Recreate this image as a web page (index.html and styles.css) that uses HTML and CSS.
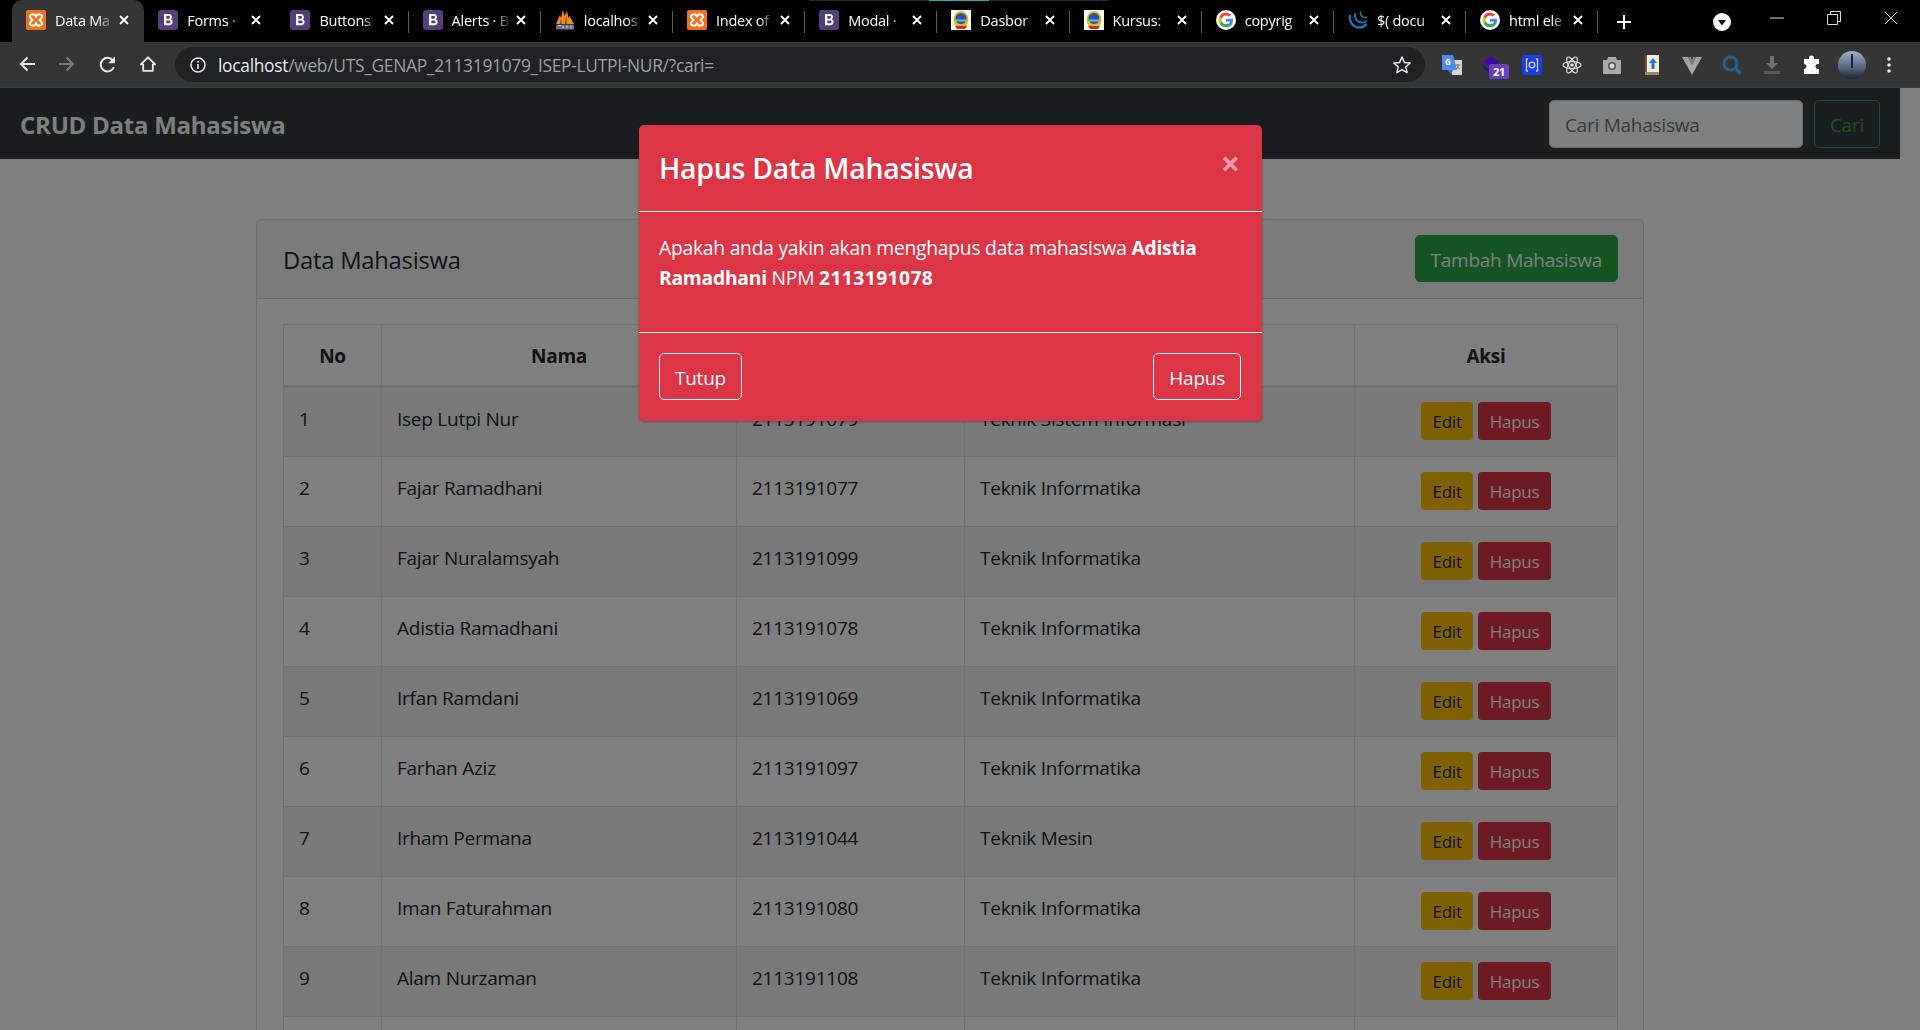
FILE: index.html
```html
<!DOCTYPE html>
<html lang="id">
<head>
  <meta charset="UTF-8">
  <title>Data Mahasiswa</title>
  <link rel="stylesheet" href="styles.css">
</head>
<body>
  <svg class="defs" width="0" height="0">
    <symbol id="i-xampp" viewBox="0 0 20 20">
      <rect width="20" height="20" rx="2" fill="#f0741f"/>
      <path d="M6 4.500h2.500l1.500 2 1.500-2H14a2 2 0 0 1 1.500 3.300L13.500 10l2 2.200A2 2 0 0 1 14 15.500h-2.500L10 13.500l-1.500 2H6a2 2 0 0 1-1.500-3.300L6.500 10l-2-2.200A2 2 0 0 1 6 4.500z" fill="none" stroke="#fff" stroke-width="2"/>
    </symbol>
    <symbol id="i-boot" viewBox="0 0 20 20">
      <rect width="20" height="20" rx="3" fill="#563d7c"/>
      <path d="M6 4h5a3 3 0 0 1 2 5.200 3.200 3.200 0 0 1-1.500 6H6zM8.300 6v2.700h2.400a1.350 1.350 0 0 0 0-2.700zM8.300 10.600v2.700h2.900a1.350 1.350 0 0 0 0-2.700z" fill="#fff" fill-rule="evenodd"/>
    </symbol>
    <symbol id="i-pma" viewBox="0 0 20 20">
      <path d="M1 14 5 5l1 3 2-8 1.500 6L12 1l1.500 7 1-2L19 14z" fill="#f28a1c"/>
      <path d="M6 8 5 14h1.500zM11.500 3 10 14h1.500z" fill="#6b3d10"/>
      <rect x="1" y="14.500" width="18" height="5" rx="1" fill="#66728c"/>
      <path d="M3 15.500h3M8 15.500v3M12 15.500v3M16 15.500v3" stroke="#c8cfdd"/>
    </symbol>
    <symbol id="i-logo" viewBox="0 0 20 20">
      <rect width="20" height="20" fill="#fff"/>
      <ellipse cx="10" cy="9.500" rx="7.500" ry="8.500" fill="#e8b90f"/>
      <circle cx="10" cy="8.500" r="5.500" fill="#1d57b5"/>
      <path d="M5 9.500h10v2H5z" fill="#7fb2e5"/>
      <path d="M4 16h12l-2 3H6z" fill="#d2261f"/>
    </symbol>
    <symbol id="i-google" viewBox="0 0 20 20">
      <circle cx="10" cy="10" r="10" fill="#fff"/>
      <path d="M17 10.200c0-.5 0-1-.1-1.500H10v2.900h4a3.400 3.400 0 0 1-1.500 2.200l2.400 1.900c1.400-1.300 2.100-3.200 2.100-5.500z" fill="#4285f4"/>
      <path d="M10 17.300c2 0 3.600-.7 4.900-1.800l-2.400-1.900c-.7.500-1.500.7-2.500.7a4.300 4.300 0 0 1-4.100-3L3.400 13.200a7.300 7.300 0 0 0 6.600 4.100z" fill="#34a853"/>
      <path d="M5.900 11.300a4.300 4.300 0 0 1 0-2.700L3.400 6.700a7.300 7.300 0 0 0 0 6.500z" fill="#fbbc05"/>
      <path d="M10 5.600c1.100 0 2.100.4 2.800 1.100L15 4.600a7.300 7.300 0 0 0-11.600 2.100l2.500 1.900A4.300 4.300 0 0 1 10 5.600z" fill="#ea4335"/>
    </symbol>
    <symbol id="i-jquery" viewBox="0 0 20 20">
      <g fill="none" stroke="#1f74b4" stroke-linecap="round">
        <path d="M2 6c-1 6 3.500 12 10 11.500 2.500-.2 4.500-1.200 6-3" stroke-width="2.400"/>
        <path d="M7 4c-.6 4 2 8 6.500 8.500 1.700.2 3.300-.2 4.500-1" stroke-width="2"/>
        <path d="M12.500 2c-.5 2.500 1 5 3.700 5.500.8.100 1.500 0 2.200-.3" stroke-width="1.700"/>
      </g>
    </symbol>
    <symbol id="i-close" viewBox="0 0 12 12">
      <path d="M2 2l8 8M10 2l-8 8" stroke="#fff" stroke-width="1.800" fill="none"/>
    </symbol>
  </svg>

  <div class="tabstrip">
    <span class="load-line"></span>
    <div class="tab active"><svg class="fav"><use href="#i-xampp"/></svg><span class="tab-title">Data Ma</span><svg class="tab-x"><use href="#i-close"/></svg></div>
    <div class="tab"><svg class="fav"><use href="#i-boot"/></svg><span class="tab-title">Forms ·</span><svg class="tab-x"><use href="#i-close"/></svg></div>
    <div class="tab"><svg class="fav"><use href="#i-boot"/></svg><span class="tab-title">Buttons</span><svg class="tab-x"><use href="#i-close"/></svg></div>
    <div class="tab"><svg class="fav"><use href="#i-boot"/></svg><span class="tab-title">Alerts · B</span><svg class="tab-x"><use href="#i-close"/></svg></div>
    <div class="tab"><svg class="fav"><use href="#i-pma"/></svg><span class="tab-title">localhos</span><svg class="tab-x"><use href="#i-close"/></svg></div>
    <div class="tab"><svg class="fav"><use href="#i-xampp"/></svg><span class="tab-title">Index of</span><svg class="tab-x"><use href="#i-close"/></svg></div>
    <div class="tab"><svg class="fav"><use href="#i-boot"/></svg><span class="tab-title">Modal ·</span><svg class="tab-x"><use href="#i-close"/></svg></div>
    <div class="tab"><svg class="fav"><use href="#i-logo"/></svg><span class="tab-title">Dasbor</span><svg class="tab-x"><use href="#i-close"/></svg></div>
    <div class="tab"><svg class="fav"><use href="#i-logo"/></svg><span class="tab-title">Kursus:</span><svg class="tab-x"><use href="#i-close"/></svg></div>
    <div class="tab"><svg class="fav"><use href="#i-google"/></svg><span class="tab-title">copyrig</span><svg class="tab-x"><use href="#i-close"/></svg></div>
    <div class="tab"><svg class="fav"><use href="#i-jquery"/></svg><span class="tab-title">$( docu</span><svg class="tab-x"><use href="#i-close"/></svg></div>
    <div class="tab"><svg class="fav"><use href="#i-google"/></svg><span class="tab-title">html ele</span><svg class="tab-x"><use href="#i-close"/></svg></div>
    <svg class="new-tab" viewBox="0 0 16 16"><path d="M8 1v14M1 8h14" stroke="#fff" stroke-width="2"/></svg>
    <div class="strip-right">
      <svg class="tab-search" viewBox="0 0 18 18"><circle cx="9" cy="9" r="9" fill="#fff"/><path d="M5 7h8l-4 5.500z" fill="#111"/></svg>
      <div class="win-btns">
        <svg viewBox="0 0 14 14"><path d="M0 7h14" stroke="#ddd"/></svg>
        <svg viewBox="0 0 14 14"><path d="M.5 3.500h10v10H.5zM3.500 3.500v-3h10v10h-3" stroke="#ddd" fill="none"/></svg>
        <svg viewBox="0 0 14 14"><path d="M1 1l12 12M13 1L1 13" stroke="#ddd"/></svg>
      </div>
    </div>
  </div>

  <div class="toolbar">
    <div class="nav-btns">
      <svg viewBox="0 0 16 16"><path d="M16 8H2M8.500 1.500 2 8l6.500 6.500" stroke="#e8eaed" stroke-width="2" fill="none"/></svg>
      <svg viewBox="0 0 16 16"><path d="M0 8h14M7.500 1.500 14 8l-6.500 6.500" stroke="#7b7d80" stroke-width="2" fill="none"/></svg>
      <svg viewBox="0 0 16 16"><path d="M14 10.500A6.400 6.400 0 1 1 13.200 4.300" stroke="#e8eaed" stroke-width="1.900" fill="none"/><path d="M15 .500v6.300H8.700z" fill="#e8eaed"/></svg>
      <svg viewBox="0 0 16 16"><path d="M8 1.300.800 8.300h2.400v6.500h9.600V8.300h2.400z" stroke="#e8eaed" stroke-width="1.800" fill="none" stroke-linejoin="round"/></svg>
    </div>
    <div class="omnibox">
      <svg class="info" viewBox="0 0 16 16"><circle cx="8" cy="8" r="7" stroke="#e8eaed" stroke-width="1.500" fill="none"/><path d="M7.200 7h1.600v5H7.200zM7.200 4h1.600v1.600H7.200z" fill="#e8eaed"/></svg>
      <span class="url"><span class="url-host">localhost</span>/web/UTS_GENAP_2113191079_ISEP-LUTPI-NUR/?cari=</span>
      <svg class="star" viewBox="0 0 20 20"><path d="m10 2 2.400 5.400 5.800.6-4.400 3.900 1.300 5.800-5.100-3-5.100 3 1.300-5.800L1.800 8l5.800-.6z" stroke="#e8eaed" stroke-width="1.500" fill="none" stroke-linejoin="round"/></svg>
    </div>
    <div class="ext-list">
      <svg viewBox="0 0 20 20"><path d="M8 5h12v15H10z" fill="#d6d6d6"/><path d="M0 0h11l4 15H0z" fill="#4d8bf0"/><path d="M5 15h6l-2 4z" fill="#3367c0"/><text class="ext-g" x="3" y="10">G</text><path d="M13.500 10h5M16 9v1M15 10c0 2 1.500 3.500 3 4M17 10c0 2-1.500 3.500-3 4" stroke="#777" fill="none"/></svg>
      <div class="ext-badge-wrap">
        <svg viewBox="0 0 20 20"><path d="M9 1l8 6-8 6-8-6z" fill="#3a0ca3"/><path d="M1 10l8 6 8-6v3l-8 6-8-6z" fill="#33099a"/></svg>
        <span class="ext-badge">21</span>
      </div>
      <svg viewBox="0 0 20 20"><rect width="20" height="24" y="-2" rx="5" fill="#1a3fe8"/><path d="M6 4H4.500v12H6M14 4h1.500v12H14" stroke="#cfd6ff" stroke-width="1.300" fill="none"/><circle cx="10" cy="10" r="2.800" stroke="#cfd6ff" stroke-width="1.300" fill="none"/></svg>
      <svg viewBox="0 0 20 20"><g stroke="#e0e0e0" stroke-width="1.200" fill="none"><ellipse cx="10" cy="10" rx="9" ry="3.500"/><ellipse cx="10" cy="10" rx="9" ry="3.500" transform="rotate(60 10 10)"/><ellipse cx="10" cy="10" rx="9" ry="3.500" transform="rotate(120 10 10)"/></g><circle cx="10" cy="10" r="1.800" fill="#e0e0e0"/></svg>
      <svg viewBox="0 0 20 20"><path d="M1 5h4l1-3h8l1 3h4v14H1z" fill="#a8a8a8"/><circle cx="10" cy="11" r="4" fill="#555"/><circle cx="10" cy="11" r="2.400" fill="#d8d8d8"/></svg>
      <svg viewBox="0 0 20 20"><rect x="3" y="0" width="14" height="20" fill="#f3ecd2"/><rect x="3" y="0" width="2" height="20" fill="#7a5a30"/><rect x="3" y="17" width="14" height="3" fill="#9a8a68"/><path d="M11 3l4 5h-2.500v6h-3V8H7z" fill="#1180d8"/></svg>
      <svg viewBox="0 0 20 20"><path d="M0 2h6l4 8 4-8h6L10 20z" fill="#a5a5a5"/><path d="M6 2h3l1 3 1-3h3l-4 8z" fill="#7d7d7d"/></svg>
      <svg viewBox="0 0 20 20"><circle cx="8.500" cy="8.500" r="6.500" stroke="#1f6390" stroke-width="3" fill="none"/><path d="M13 13l6 6" stroke="#1f6390" stroke-width="3"/></svg>
      <svg viewBox="0 0 20 20"><path d="M8 1h4v7h4l-6 6-6-6h4z" fill="#6e6e6e"/><rect x="2" y="16" width="16" height="3" fill="#5a5a5a"/></svg>
      <svg viewBox="0 0 20 20"><path d="M7 3a2.500 2.500 0 0 1 5 0v1h5v5h-1a2.500 2.500 0 0 0 0 5h1v5H2v-5a2.500 2.500 0 0 0 0-5V4h5z" fill="#fff"/></svg>
      <span class="avatar"></span>
      <svg class="kebab" viewBox="0 0 4 18"><circle cx="2" cy="3" r="1.800" fill="#e8eaed"/><circle cx="2" cy="9" r="1.800" fill="#e8eaed"/><circle cx="2" cy="15" r="1.800" fill="#e8eaed"/></svg>
    </div>
  </div>

  <div class="page">
    <div class="content">
      <nav class="navbar">
        <a class="brand">CRUD Data Mahasiswa</a>
        <form class="search">
          <input class="search-input" type="text" placeholder="Cari Mahasiswa">
          <button class="btn btn-outline-success" type="button">Cari</button>
        </form>
      </nav>

      <div class="card">
        <div class="card-header">
          <h5 class="card-title">Data Mahasiswa</h5>
          <button class="btn btn-success" type="button">Tambah Mahasiswa</button>
        </div>
        <div class="card-body">
          <table class="data-table">
            <colgroup>
              <col class="c-no"><col class="c-nama"><col class="c-npm"><col class="c-jur"><col class="c-aksi">
            </colgroup>
            <thead>
              <tr><th>No</th><th>Nama</th><th>NPM</th><th>Jurusan</th><th>Aksi</th></tr>
            </thead>
            <tbody>
              <tr><td>1</td><td>Isep Lutpi Nur</td><td>2113191079</td><td>Teknik Sistem Informasi</td><td class="aksi"><a class="btn-sm btn-warning">Edit</a><a class="btn-sm btn-danger">Hapus</a></td></tr>
              <tr><td>2</td><td>Fajar Ramadhani</td><td>2113191077</td><td>Teknik Informatika</td><td class="aksi"><a class="btn-sm btn-warning">Edit</a><a class="btn-sm btn-danger">Hapus</a></td></tr>
              <tr><td>3</td><td>Fajar Nuralamsyah</td><td>2113191099</td><td>Teknik Informatika</td><td class="aksi"><a class="btn-sm btn-warning">Edit</a><a class="btn-sm btn-danger">Hapus</a></td></tr>
              <tr><td>4</td><td>Adistia Ramadhani</td><td>2113191078</td><td>Teknik Informatika</td><td class="aksi"><a class="btn-sm btn-warning">Edit</a><a class="btn-sm btn-danger">Hapus</a></td></tr>
              <tr><td>5</td><td>Irfan Ramdani</td><td>2113191069</td><td>Teknik Informatika</td><td class="aksi"><a class="btn-sm btn-warning">Edit</a><a class="btn-sm btn-danger">Hapus</a></td></tr>
              <tr><td>6</td><td>Farhan Aziz</td><td>2113191097</td><td>Teknik Informatika</td><td class="aksi"><a class="btn-sm btn-warning">Edit</a><a class="btn-sm btn-danger">Hapus</a></td></tr>
              <tr><td>7</td><td>Irham Permana</td><td>2113191044</td><td>Teknik Mesin</td><td class="aksi"><a class="btn-sm btn-warning">Edit</a><a class="btn-sm btn-danger">Hapus</a></td></tr>
              <tr><td>8</td><td>Iman Faturahman</td><td>2113191080</td><td>Teknik Informatika</td><td class="aksi"><a class="btn-sm btn-warning">Edit</a><a class="btn-sm btn-danger">Hapus</a></td></tr>
              <tr><td>9</td><td>Alam Nurzaman</td><td>2113191108</td><td>Teknik Informatika</td><td class="aksi"><a class="btn-sm btn-warning">Edit</a><a class="btn-sm btn-danger">Hapus</a></td></tr>
              <tr><td></td><td></td><td></td><td></td><td></td></tr>
            </tbody>
          </table>
        </div>
      </div>
    </div>

    <div class="backdrop"></div>

    <div class="modal">
      <div class="modal-header">
        <h5 class="modal-title">Hapus Data Mahasiswa</h5>
        <span class="modal-close">×</span>
      </div>
      <div class="modal-body">
        <p>Apakah anda yakin akan menghapus data mahasiswa <b>Adistia</b> <b>Ramadhani</b> NPM <b class="npm">2113191078</b></p>
      </div>
      <div class="modal-footer">
        <button class="btn btn-outline-light" type="button">Tutup</button>
        <button class="btn btn-outline-light" type="button">Hapus</button>
      </div>
    </div>
  </div>
</body>
</html>
```

FILE: styles.css
```css
:root {
  --font-sans: 'Open Sans', 'Noto Sans', 'Liberation Sans', sans-serif;
  --border: #dee2e6;
  --text: #212529;
}
* { box-sizing: border-box; }
html, body {
  margin: 0;
  height: 100%;
  overflow: hidden;
}
body {
  display: flex;
  flex-direction: column;
  background: #fff;
  color: var(--text);
  font-family: var(--font-sans);
  font-size: 19px;
  letter-spacing: -0.25px;
}
.defs { position: absolute; }

/* tab strip */
.tabstrip {
  position: relative;
  display: flex;
  align-items: stretch;
  height: 42px;
  padding-left: 12px;
  background: #000;
  color: #fff;
  font-size: 14.5px;
}
.load-line {
  position: absolute;
  top: 0;
  left: 809px;
  width: 300px;
  height: 1px;
  background: linear-gradient(90deg, #2a2a2a 40%, #14b8a6 40%, #14b8a6 60%, #2a2a2a 60%);
}
.tab {
  position: relative;
  display: flex;
  align-items: center;
  flex: none;
  width: 132.2px;
  padding: 0 14px 2px 14px;
}
.tab::after {
  content: "";
  position: absolute;
  right: 0;
  top: 11px;
  height: 22px;
  width: 1px;
  background: #5c5c5c;
}
.tab.active {
  background: #353535;
  border-radius: 10px 10px 0 0;
}
.tab.active::after, .tab:nth-child(3)::after { display: none; }
.tab-title {
  flex: 1;
  min-width: 0;
  margin-left: 9px;
  white-space: nowrap;
  overflow: hidden;
  -webkit-mask-image: linear-gradient(90deg, #000 72%, transparent 100%);
  mask-image: linear-gradient(90deg, #000 72%, transparent 100%);
}
.fav { flex: none; width: 20px; height: 20px; }
.tab-x { flex: none; width: 12px; height: 12px; margin-left: 4px; }
.new-tab { flex: none; width: 16px; height: 16px; margin: 14px 0 0 18px; }
.strip-right {
  display: flex;
  align-items: flex-start;
  margin-left: auto;
}
.tab-search { width: 18px; height: 18px; margin: 13px 39px 0 0; }
.win-btns {
  display: flex;
  gap: 43px;
  padding: 11px 22px 0 0;
}
.win-btns svg { width: 14px; height: 14px; }

/* toolbar */
.toolbar {
  display: flex;
  align-items: center;
  height: 46px;
  background: #353535;
  border-bottom: 1px solid #3d3a38;
}
.nav-btns {
  display: flex;
  flex: none;
  gap: 24px;
  margin-left: 19px;
}
.nav-btns svg { width: 16px; height: 16px; }
.nav-btns svg:nth-child(3) { width: 17px; height: 17px; }
.omnibox {
  display: flex;
  align-items: center;
  flex: none;
  width: 1250px;
  height: 35px;
  margin-left: 19px;
  padding: 0 13px 0 15px;
  background: #202124;
  border-radius: 18px;
}
.info { flex: none; width: 16px; height: 16px; }
.url {
  flex: 1;
  margin-left: 12px;
  color: #9aa0a6;
  font-size: 17.400px;
  letter-spacing: -0.3px;
  white-space: nowrap;
}
.url-host { color: #e8eaed; }
.star { flex: none; width: 20px; height: 20px; }
.ext-list {
  display: flex;
  align-items: center;
  gap: 20px;
  margin-left: 17px;
}
.ext-list > svg { flex: none; width: 20px; height: 20px; }
.ext-g {
  fill: #fff;
  font-size: 8px;
  font-weight: 700;
  letter-spacing: 0;
}
.ext-badge-wrap { position: relative; width: 20px; height: 20px; }
.ext-badge-wrap svg { width: 20px; height: 20px; margin-top: -4px; }
.ext-badge {
  position: absolute;
  left: 7px;
  top: 9px;
  width: 20px;
  height: 15px;
  background: #6a3fc0;
  border-radius: 2px;
  color: #fff;
  font-size: 11px;
  font-weight: 700;
  line-height: 15px;
  text-align: center;
}
.avatar {
  flex: none;
  width: 28px;
  height: 28px;
  margin: 0 -4px;
  border-radius: 50%;
  background: linear-gradient(90deg, transparent 48%, #1d2530 48%, #1d2530 53%, transparent 53%) center 3px / 100% 14px no-repeat,
    linear-gradient(180deg, #9fb0c8, #5d6e88 55%, #1d2530);
}
.ext-list > .kebab { width: 4px; height: 18px; margin-left: 5px; }

/* page */
.page {
  position: relative;
  flex: 1;
  min-height: 0;
  overflow: hidden;
}
.content { width: 1900px; }
.navbar {
  display: flex;
  align-items: center;
  justify-content: space-between;
  height: 71px;
  padding: 0 20px;
  background: #343a40;
}
.brand {
  margin-top: 2px;
  color: #fff;
  font-size: 24px;
  font-weight: 700;
}
.search { display: flex; gap: 11px; }
.search-input {
  width: 254px;
  height: 48px;
  padding: 2px 15px 0;
  background: #fff;
  border: 1px solid #ced4da;
  border-radius: 5px;
  font: inherit;
  letter-spacing: inherit;
}
.search-input::placeholder { color: #6c757d; opacity: 1; }
.btn {
  height: 48px;
  padding: 2px 15px 0;
  border: 1px solid transparent;
  border-radius: 5px;
  background: transparent;
  font: inherit;
  letter-spacing: inherit;
}
.btn-outline-success { color: #28a745; border-color: #28a745; }
.btn-success {
  height: 47px;
  margin-top: -1px;
  background: #28a745;
  border-color: #28a745;
  color: #fff;
}
.btn-outline-light { height: 47px; margin-top: 1px; color: #f8f9fa; border-color: #f8f9fa; }

.card {
  margin: 60px 256px 0;
  background: #fff;
  border: 1px solid rgba(0, 0, 0, .125);
  border-radius: 5px;
}
.card-header {
  display: flex;
  align-items: center;
  justify-content: space-between;
  height: 79px;
  padding: 0 25px 0 26px;
  background: rgba(0, 0, 0, .03);
  border-bottom: 1px solid rgba(0, 0, 0, .125);
}
.card-title {
  margin: 2px 0 0;
  font-size: 23.800px;
  font-weight: 400;
}
.card-body { padding: 25px 25px 25px 26px; }
.data-table {
  width: 100%;
  border-collapse: collapse;
  table-layout: fixed;
}
.c-no { width: 98px; }
.c-nama { width: 355px; }
.c-npm { width: 228px; }
.c-jur { width: 390px; }
.data-table th {
  height: 62px;
  padding: 2px 15px 0;
  border: 1px solid var(--border);
  border-bottom-width: 3px;
  font-weight: 700;
  text-align: center;
}
.data-table td {
  height: 70px;
  padding: 15px;
  border: 1px solid var(--border);
  vertical-align: top;
  line-height: 32px;
}
.data-table tbody tr:nth-child(odd) { background: rgba(0, 0, 0, .05); }
.data-table .aksi { padding: 0 0 2px 66px; vertical-align: middle; }
.aksi { white-space: nowrap; }
.btn-sm {
  display: inline-block;
  height: 38px;
  padding: 0 11.500px;
  border-radius: 4px;
  font-size: 17px;
  line-height: 40px;
  vertical-align: middle;
}
.btn-warning { background: #ffc107; color: var(--text); }
.btn-danger { margin-left: 5px; background: #dc3545; color: #fff; }

/* modal over the page */
.backdrop {
  position: absolute;
  inset: 0;
  background: rgba(0, 0, 0, .5);
}
.modal {
  position: absolute;
  left: 639px;
  top: 37px;
  width: 623px;
  height: 296px;
  display: flex;
  flex-direction: column;
  background: #dc3545;
  color: #fff;
  border-radius: 5px;
  box-shadow: 0 1px 3px rgba(0, 0, 0, .3);
}
.modal-header {
  display: flex;
  justify-content: space-between;
  flex: none;
  height: 87px;
  padding: 0 20px;
  border-bottom: 1px solid #f8f9fa;
}
.modal-title {
  margin: 0;
  font-size: 28.400px;
  font-weight: 600;
  line-height: 87px;
}
.modal-close {
  margin-right: 2px;
  color: #fff;
  opacity: .5;
  font-size: 34px;
  font-weight: 700;
  line-height: 76px;
}
.modal-body {
  flex: 1;
  padding: 20.500px 20px 0;
  border-bottom: 1px solid #f8f9fa;
  font-size: 19.300px;
}
.modal-body p { margin: 0; line-height: 30px; }
.modal-body .npm { letter-spacing: .4px; }
.modal-footer {
  display: flex;
  justify-content: space-between;
  flex: none;
  height: 88px;
  padding: 19px 21px 19px 20px;
}
```
